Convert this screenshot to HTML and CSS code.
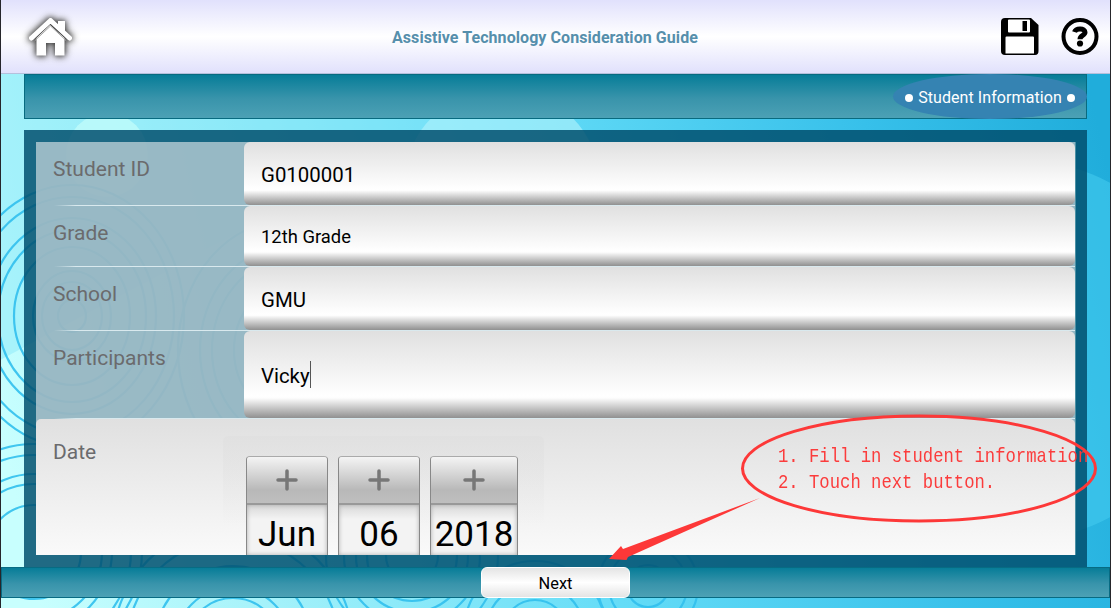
FILE: index.html
```html
<!DOCTYPE html>
<html lang="en">
<head>
<meta charset="utf-8">
<title>Assistive Technology Consideration Guide</title>
<link rel="stylesheet" href="styles.css">
</head>
<body>
<div class="app">
  <svg class="backdrop" viewBox="0 0 1111 608" aria-hidden="true">
    <defs>
      <linearGradient id="sea" gradientUnits="userSpaceOnUse" x1="0" y1="430" x2="1111" y2="180">
        <stop offset="0" stop-color="#c8fffe"/><stop offset=".18" stop-color="#a8f3fa"/><stop offset=".5" stop-color="#64dcf7"/><stop offset=".8" stop-color="#37c0ea"/><stop offset="1" stop-color="#20addb"/>
      </linearGradient>
    </defs>
    <rect width="1111" height="608" fill="url(#sea)"/>
    <path d="M0 74H425L430 130 0 360Z" fill="#7de4f7" opacity=".4"/>
    <ellipse cx="107" cy="155" rx="41" ry="42" fill="#c4fdfb" opacity=".7"/>
    <ellipse cx="502" cy="185" rx="98" ry="97" fill="#b4f4fb" opacity=".6"/>
    <circle cx="1020" cy="350" r="190" fill="#43c9ee" opacity=".6"/>
    <g fill="none" stroke="#32c0ee" stroke-width="2.200" opacity=".9">
      <ellipse cx="72" cy="316" rx="14" ry="16"/><ellipse cx="72" cy="316" rx="30" ry="34"/><ellipse cx="72" cy="316" rx="39" ry="45"/><ellipse cx="72" cy="316" rx="58" ry="69"/><ellipse cx="72" cy="316" rx="74" ry="86"/><ellipse cx="72" cy="316" rx="84" ry="98"/><ellipse cx="72" cy="316" rx="102" ry="119"/><ellipse cx="72" cy="316" rx="112" ry="131"/>
      <ellipse cx="288" cy="350" rx="110" ry="130"/><ellipse cx="288" cy="350" rx="88" ry="104"/><ellipse cx="288" cy="350" rx="76" ry="90"/><ellipse cx="288" cy="350" rx="54" ry="65"/>
      <circle cx="34" cy="552" r="47"/><circle cx="34" cy="552" r="68"/><circle cx="34" cy="552" r="78"/><circle cx="34" cy="552" r="97"/><circle cx="34" cy="552" r="108"/>
      <circle cx="233" cy="645" r="47"/><circle cx="233" cy="645" r="58"/><circle cx="233" cy="645" r="79"/><circle cx="233" cy="645" r="106"/><circle cx="233" cy="645" r="120"/>
      <circle cx="412" cy="556" r="26"/><circle cx="412" cy="556" r="45"/><circle cx="412" cy="556" r="56"/><circle cx="412" cy="556" r="68"/><circle cx="412" cy="556" r="86"/>
      <circle cx="535" cy="632" r="32"/><circle cx="535" cy="632" r="49"/><circle cx="535" cy="632" r="71"/>
      <circle cx="648" cy="586" r="21"/><circle cx="648" cy="586" r="39"/><circle cx="648" cy="586" r="50"/>
      <circle cx="424" cy="290" r="144"/>
    </g>
  </svg>

  <header class="topbar">
    <svg class="home" width="60" height="60" viewBox="0 0 60 60" role="img" aria-label="Home">
      <path class="home-shape" d="M38 12h7v13l-7-6zM30 16 44.500 29V46.500H35V34H26V46.500H16.500V29Z"/>
      <path class="home-roof" d="M11.500 29 30.500 11.500 49.500 29"/>
      <path class="home-eave" d="M15 31.500 30.500 17 46 31.500"/>
    </svg>
    <h1 class="title">Assistive Technology Consideration Guide</h1>
    <div class="tools">
      <svg width="38" height="38" viewBox="0 0 38 38" role="img" aria-label="Save">
        <path d="M4 0H30L37.500 7V33Q37.500 37 34 37H4Q0 37 0 33V4Q0 0 4 0Z"/>
        <path fill="#fff" d="M7 2Q7 1.500 8 1.500H28Q29 1.500 29 2.500V13.500Q29 14.500 28 14.500H8Q7 14.500 7 13.500ZM5.500 18.500H32Q33 18.500 33 19.500V35.500H4.500V19.500Q4.500 18.500 5.500 18.500Z"/>
        <path d="M21.500 3H26V13H21.500Z"/>
      </svg>
      <svg width="38" height="38" viewBox="0 0 38 38" role="img" aria-label="Help">
        <circle cx="19" cy="18.500" r="16.500" fill="#fff" fill-opacity=".6" stroke="#000" stroke-width="4"/>
        <path d="M13.500 14C15 9.800 24 10 24 14.300 24 17.800 19 17 19 21.300" fill="none" stroke="#000" stroke-width="5"/>
        <circle cx="19" cy="25.500" r="3.100"/>
      </svg>
    </div>
  </header>

  <nav class="crumbs"><span class="crumb"><i class="dot"></i>Student Information<i class="dot"></i></span></nav>

  <main class="panel">
    <form class="sheet">
      <div class="row r1"><label>Student ID</label><div class="field">G0100001</div></div>
      <div class="row r2"><label>Grade</label><div class="field small">12th Grade</div></div>
      <div class="row r3"><label>School</label><div class="field">GMU</div></div>
      <div class="row r4"><label>Participants</label><div class="field">Vicky<span class="caret"></span></div></div>
      <div class="date-row">
        <label>Date</label>
        <div class="picker">
          <div class="wheel"><div class="plus"><svg width="22" height="22" viewBox="0 0 22 22"><path d="M11 2V20M2 11H20"/></svg></div><div class="value">Jun</div></div>
          <div class="wheel"><div class="plus"><svg width="22" height="22" viewBox="0 0 22 22"><path d="M11 2V20M2 11H20"/></svg></div><div class="value">06</div></div>
          <div class="wheel year"><div class="plus"><svg width="22" height="22" viewBox="0 0 22 22"><path d="M11 2V20M2 11H20"/></svg></div><div class="value">2018</div></div>
        </div>
      </div>
    </form>
  </main>

  <footer class="bottombar"><button class="next" type="button">Next</button></footer>

  <svg class="callout" viewBox="0 0 1111 608" aria-hidden="true">
    <ellipse cx="919" cy="468.500" rx="176.500" ry="52.500"/>
    <path d="M760 498 628 557 626.500 560 609 559 621 546 623 549Z"/>
  </svg>
  <div class="note"><div>1. Fill in student information.</div><div>2. Touch next button.</div></div>
</div>
</body>
</html>
```
FILE: styles.css
```css
* { box-sizing: border-box; }
body { margin: 0; font-family: Roboto, "Liberation Sans", sans-serif; }
.app { position: relative; width: 1111px; height: 608px; overflow: hidden; display: flex; flex-direction: column; border: solid #26262b; border-width: 0 1px; }
.backdrop, .callout { position: absolute; left: -1px; top: 0; width: 1111px; height: 608px; pointer-events: none; }
.topbar, .crumbs, .panel, .bottombar { position: relative; flex: none; }

.topbar { height: 74px; padding: 0 11px 0 19px; display: flex; align-items: center; justify-content: space-between; background: linear-gradient(#e1e1fc, #fff 50%, #e1e1fc); border-bottom: 1px solid #b4c0dc; }
.home { margin-top: 5px; filter: drop-shadow(0 0 3px #333) drop-shadow(0 0 3px #888); overflow: visible; }
.home-shape { fill: #fff; }
.home-roof, .home-eave { fill: none; stroke: #fff; stroke-width: 5; stroke-linecap: round; stroke-linejoin: round; }
.home-eave { stroke: #aaa; stroke-width: 1; }
.title { margin: 0 0 0 219px; flex: 1; padding: 2px 0 0 93px; font-size: 16px; line-height: 20px; font-weight: 700; letter-spacing: .07px; color: #568fac; }
.tools { display: flex; gap: 22px; }

.crumbs { margin: 0 23px; height: 45px; display: flex; justify-content: flex-end; border: 1px solid #086b80; background: linear-gradient(#077d98, #3994ab 55%, #4ca1b5); }
.crumb { width: 194px; margin: -1px; display: flex; align-items: center; justify-content: center; gap: 5px; padding-top: 2px; border-radius: 50%; background: #3583b2; color: #fff; font-size: 16px; letter-spacing: .08px; }
.dot { width: 8px; height: 8px; border-radius: 50%; background: #fff; }

.panel { margin: 11px 23px 0; height: 437px; padding: 12px; background: rgba(0, 77, 109, .84); }
.sheet { width: 1040px; height: 413px; overflow: hidden; background: rgba(219, 228, 231, .66); border-right: 1px solid #4c91a5; display: flex; flex-direction: column; }
.row { flex: none; display: flex; background: linear-gradient(90deg, transparent 18px, #d9e9ee 40px) bottom / 100% 1px no-repeat; }
.row label { width: 208px; padding: 14px 0 0 17px; font-size: 21px; line-height: 26px; color: #6b6b6d; }
.field { flex: 1; margin-bottom: 1px; padding-left: 17px; display: flex; align-items: center; border-radius: 6px; font-size: 20.400px; color: #000; background: linear-gradient(#e0e0e0, #fff 75%, #fdfdfd 77%, #909090); }
.field.small { font-size: 18.400px; }
.r1 { height: 64px; }
.r2 { height: 61px; }
.r3 { height: 64px; }
.r4 { height: 88px; }
.r1 .field { padding-top: 3px; }
.r2 .field { padding-top: 1px; }
.r3 .field { padding-top: 2px; }
.r4 .field { padding-top: 3px; }
.caret { width: 1px; height: 27px; margin-top: -4px; background: #555; }

.date-row { flex: 1; display: flex; border-radius: 5px 5px 0 0; background: linear-gradient(#e0e0e0, #fafafa); }
.date-row label { width: 187px; padding: 20px 0 0 17px; font-size: 21px; line-height: 26px; color: #6b6b6d; }
.picker { width: 321px; margin-top: 17px; padding: 20px 0 0 23px; display: flex; gap: 10px; border-radius: 5px; background: linear-gradient(rgba(222, 222, 222, .5), rgba(240, 240, 240, 0) 90px); }
.wheel { width: 82px; height: 100px; display: flex; flex-direction: column; border: 1px solid #888; border-top-color: #aaa; border-radius: 4px 4px 0 0; }
.wheel.year { width: 88px; }
.plus { height: 48px; display: flex; align-items: center; justify-content: center; border-bottom: 2px solid #999; border-radius: 3px 3px 0 0; background: linear-gradient(#f4f4f4, #b8b8b8 72%, #bfbfbf); }
.plus path { stroke: #777; stroke-width: 3.500; stroke-linecap: round; }
.value { flex: 1; padding-top: 9px; text-align: center; font-size: 35px; line-height: 41px; color: #000; background: linear-gradient(#d8d8d8, #f3f3f3 14px); box-shadow: inset 0 0 4px #aaa; }

.bottombar { height: 31px; display: flex; justify-content: center; border: 1px solid #076b83; background: linear-gradient(#077d98, #3994ab 55%, #4ca1b5); }
.next { width: 149px; margin: -1px 0; padding: 2px 0 0; border: 1px solid #fff; border-radius: 6px; background: linear-gradient(#e4e4e4, #fff 50%, #e4e4e4); font: 16.400px Roboto, sans-serif; color: #000; }

.callout ellipse { fill: none; stroke: #fd3838; stroke-width: 3; }
.callout path { fill: #fd3838; }
.note { position: absolute; left: 777px; top: 443.500px; font: 17.240px/21.700px "Liberation Mono", monospace; color: #fb3c3c; white-space: pre; transform: scaleY(1.2); transform-origin: 0 0; }
```
